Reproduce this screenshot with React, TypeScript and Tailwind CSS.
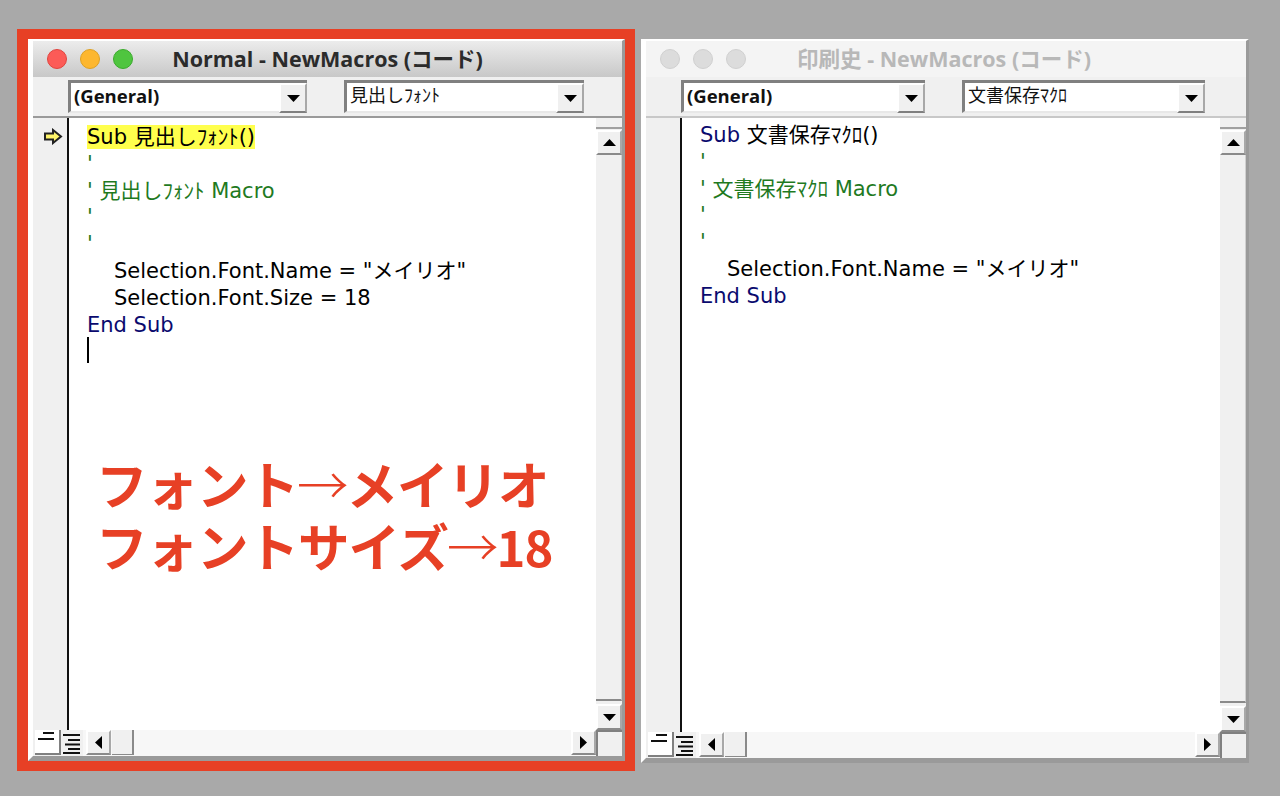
import React from "react";

const Tri = ({ dir }: { dir: "up" | "down" | "left" | "right" }) => {
  const pts = { up: "0,7 6.500,0 13,7", down: "0,0 13,0 6.500,7", left: "7,0 7,13 0,6.500", right: "0,0 0,13 7,6.500" }[dir];
  const vertical = dir === "up" || dir === "down";
  return (
    <svg width={vertical ? 13 : 7} height={vertical ? 7 : 13} viewBox={vertical ? "0 0 13 7" : "0 0 7 13"}>
      <polygon points={pts} fill="#000" />
    </svg>
  );
};

const Btn = ({ dir, className }: { dir: "up" | "down" | "left" | "right"; className: string }) => (
  <div className={`flex items-center justify-center bg-[#f0f0f0] border-t-2 border-l-2 border-white border-r-2 border-b-2 border-r-[#a8a8a8] border-b-[#8a8a8a] shrink-0 ${className}`}>
    <Tri dir={dir} />
  </div>
);

const Select = ({ w, bold, children }: { w: string; bold?: boolean; children: React.ReactNode }) => (
  <div className={`flex h-[33px] bg-white border-t-[3px] border-l-[3px] border-[#808080] border-b-[2px] border-b-[#e8e8e8] ${w}`}>
    <div className={`flex-1 pl-[3px] leading-[26px] text-[#111] whitespace-nowrap overflow-hidden ${bold ? "font-bold text-[18.500px] font-['Open_Sans']" : "text-[18px]"}`}>{children}</div>
    <Btn dir="down" className="w-[28px] h-[30px] -mb-[2px] border-r-[#808080] border-b-[#808080]" />
  </div>
);

const ListIcon = ({ full }: { full?: boolean }) => (
  <svg width="22" height="24" viewBox="0 0 22 24" className="block">
    <g stroke="#111" strokeWidth="2">
      {full ? (
        <path d="M2 5h17M7 10h12M4 14.500h15M7 19h12M2 23h17" />
      ) : (
        <path d="M8 3h11M3 9h16" />
      )}
    </g>
  </svg>
);

const Line = ({ children, className = "" }: { children?: React.ReactNode; className?: string }) => (
  <div className={`h-[26.8px] leading-[26.8px] whitespace-pre ${className}`}>{children}</div>
);

const Window = ({
  active,
  title,
  proc,
  procW,
  genW,
  name,
  hasSize,
  children,
}: {
  active: boolean;
  title: string;
  proc: string;
  procW: string;
  genW: string;
  name: string;
  hasSize: boolean;
  children?: React.ReactNode;
}) => {
  const kw = "text-[#0a0a6e]";
  const cm = "text-[#1f7a1f]";
  return (
    <div className="flex flex-col h-full w-full bg-[#f0f0f0] border-t-2 border-l-[5px] border-white border-r-[3px] border-b-[5px] border-r-[#9a9a9a] border-b-[#9a9a9a]">
      <div
        className={`relative flex items-center justify-center h-[36px] pt-[1px] shrink-0 text-[21.5px] font-bold ${
          active ? "bg-gradient-to-b from-[#ececec] to-[#c8c8c8] text-[#2b2b2b]" : "bg-[#f4f4f4] text-[#b8b8b8]"
        }`}
        style={{ fontFamily: '"Open Sans", "Noto Sans CJK JP", sans-serif' }}
      >
        <div className="absolute left-[14px] top-[8px] flex gap-[13px]">
          <span className={`w-[20px] h-[20px] rounded-full ${active ? "bg-[#fc5b57] border border-[#e0443e]" : "bg-[#dcdcdc] border border-[#d0d0d0]"}`} />
          <span className={`w-[20px] h-[20px] rounded-full ${active ? "bg-[#fdb72f] border border-[#dea123]" : "bg-[#dcdcdc] border border-[#d0d0d0]"}`} />
          <span className={`w-[20px] h-[20px] rounded-full ${active ? "bg-[#4fc53f] border border-[#3aab2c]" : "bg-[#dcdcdc] border border-[#d0d0d0]"}`} />
        </div>
        <span className={active ? "" : "-ml-[4px]"}>{title}</span>
      </div>
      <div className={`flex items-center gap-[37px] h-[41px] shrink-0 pl-[35px] border-b-2 ${active ? "border-[#9a9a9a]" : "border-[#c8c8c8]"}`}>
        <Select w={genW} bold>(General)</Select>
        <Select w={procW}>{proc}</Select>
      </div>
      <div className="flex flex-1 min-h-0">
        <div className="w-[36px] shrink-0 bg-[#f0f0f0] border-r-2 border-[#111] flex justify-center pt-[10px]">
          {active && (
            <svg width="20" height="17" viewBox="0 0 20 17" className="ml-[6px]">
              <path d="M2 5.500h8V2l8 6.500L10 15v-3.500H2z" fill="#fff56a" stroke="#222" strokeWidth="2" />
            </svg>
          )}
        </div>
        <div className={`relative flex-1 bg-white min-w-0 ${active ? "pt-[6px]" : "pt-[4px]"} pl-[18px] text-[21px] text-black`}>
          <Line>
            <span className={active ? "bg-[#ffff4d]" : kw}>Sub </span>
            <span className={active ? "bg-[#ffff4d]" : ""}>{name}()</span>
          </Line>
          <Line className={cm}>'</Line>
          <Line className={cm}>' {name} Macro</Line>
          <Line className={cm}>'</Line>
          <Line className={cm}>'</Line>
          <Line className="pl-[27px]">Selection.Font.Name = "メイリオ"</Line>
          {hasSize && <Line className="pl-[27px]">Selection.Font.Size = 18</Line>}
          <Line><span className={kw}>End Sub</span></Line>
          {hasSize && <div className="w-[2px] h-[26px] bg-black -mt-[1px]" />}
          {children}
        </div>
        <div className="w-[26px] shrink-0 bg-[#f0f0f0] flex flex-col pt-[2px]">
          <div className="h-[9px] border-b-2 border-[#a0a0a0] shrink-0" />
          <Btn dir="up" className="w-full h-[25px] mt-[1px]" />
          <div className="flex-1 border-b-2 border-[#8a8a8a] border-r border-r-[#d0d0d0]" />
          <Btn dir="down" className="w-full h-[26px] mt-[3px]" />
        </div>
      </div>
      <div className="flex h-[26px] shrink-0 bg-[#f7f7f7]">
        <div className="flex shrink-0 bg-[#f0f0f0] pl-[2px]">
          <div className="w-[24px] h-[25px] bg-white border-b-2 border-[#808080]"><ListIcon /></div>
          <div className="w-[24px] h-[25px] bg-[#f0f0f0] border-l-2 border-[#808080]"><ListIcon full /></div>
        </div>
        <Btn dir="left" className="w-[25px] h-[25px] ml-[3px]" />
        <div className="w-[22px] h-[25px] bg-[#f0f0f0] border-r-2 border-b border-[#8a8a8a] ml-[1px] shrink-0" />
        <div className="flex-1" />
        <Btn dir="right" className="w-[25px] h-[25px]" />
        <div className="w-[26px] shrink-0 bg-[#f0f0f0] border-l-2 border-t-2 border-[#808080]" />
      </div>
    </div>
  );
};

export default function App() {
  return (
    <div
      className="flex w-[1280px] h-[796px] overflow-hidden bg-[#a9a9a9] pl-[17px] pt-[29px]"
      style={{ fontFamily: '"DejaVu Sans", "Noto Sans CJK JP", sans-serif' }}
    >
      <div className="w-[618px] h-[742px] border-[10px] border-l-[11px] border-[#e74025] shrink-0">
        <Window
          active
          title="Normal - NewMacros (コード)"
          proc="見出しﾌｫﾝﾄ"
          name="見出しﾌｫﾝﾄ"
          hasSize
          genW="w-[239px]"
          procW="w-[240px]"
        >
          <div
            className="absolute left-[27px] top-[334px] text-[#e74025] font-bold text-[51.500px] leading-[62px] whitespace-nowrap tracking-[-1px]"
            style={{ fontFamily: '"Noto Sans CJK JP", sans-serif' }}
          >
            <div>フォント<span className="font-light -mx-[1px]">→</span>メイリオ</div>
            <div>フォントサイズ<span className="font-light -mx-[1px]">→</span><span className="text-[49px]">18</span></div>
          </div>
        </Window>
      </div>
      <div className="w-[608px] h-[724px] ml-[6px] mt-[10px] shrink-0">
        <Window
          active={false}
          title="印刷史 - NewMacros (コード)"
          proc="文書保存ﾏｸﾛ"
          name="文書保存ﾏｸﾛ"
          hasSize={false}
          genW="w-[244px]"
          procW="w-[243px]"
        />
      </div>
    </div>
  );
}
